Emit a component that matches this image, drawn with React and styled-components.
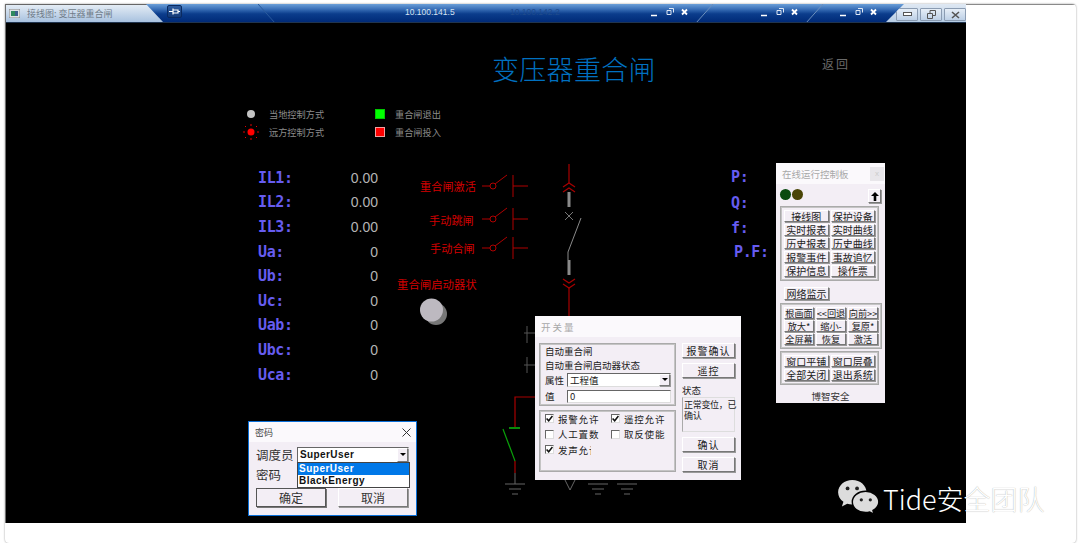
import React from 'react'
import styled, { createGlobalStyle, css } from 'styled-components'

const CJK = `"Noto Sans CJK SC", "Liberation Sans", sans-serif`

const GlobalStyle = createGlobalStyle`
  html, body {
    margin: 0;
    background: #fff;
    font-family: ${CJK};
  }
`

// page coordinates -> canvas coordinates (the canvas starts at 6,23)
const at = (x, y) => css`
  position: absolute;
  left: ${x - 6}px;
  top: ${y - 23}px;
`

const Sheet = styled.div`
  position: relative;
  width: 1071px;
  height: 539px;
  margin: 4px 0 0 5px;
  box-sizing: border-box;
  border-radius: 0 4px 4px 4px;
  box-shadow: 0 0 2px rgba(0, 0, 0, 0.45);
  background: #fff;
  overflow: hidden;
`

const TopLine = styled.div`
  position: absolute;
  left: 899px;
  right: 0;
  top: 0;
  height: 1px;
  background: #8a8a8a;
`

const Window = styled.div`
  width: 961px;
  height: 519px;
  display: flex;
  flex-direction: column;
  box-sizing: border-box;
  border-left: 1px solid #6e6e6e;
`

const TitleBar = styled.div`
  position: relative;
  height: 19px;
  flex: none;
  display: flex;
  align-items: stretch;
  background: linear-gradient(#6b9fd8 0%, #3a70b8 28%, #0b3d8c 55%, #002a78 100%);
  border-bottom: 1px solid #20344f;
  box-sizing: border-box;
  overflow: hidden;
`

const Tab = styled.div`
  position: absolute;
  left: 0;
  top: 0;
  bottom: 0;
  width: 157px;
  clip-path: polygon(0 0, 140px 0, 157px 100%, 0 100%);
  background: linear-gradient(#e4ecf5, #a8c2df);
  border-top: 1px solid #666;
  box-sizing: border-box;
  display: flex;
  align-items: center;
  gap: 7px;
  padding-left: 3px;
  font-size: 9px;
  color: #6f7b88;
`

const TabIcon = styled.svg`
  width: 11px;
  height: 9px;
  flex: none;
`

const PinButton = styled.div`
  position: absolute;
  left: 161px;
  top: 1px;
  width: 15px;
  height: 13px;
  border: 1px solid #0a2a60;
  border-radius: 2px;
  box-sizing: border-box;
  background: linear-gradient(#2d5c9e, #143a78);
  display: flex;
  align-items: center;
  justify-content: center;
`

const HostName = styled.div`
  position: absolute;
  left: ${p => p.$x}px;
  top: 3px;
  font-family: "Liberation Sans", sans-serif;
  font-size: 8.5px;
  line-height: 11px;
  color: ${p => (p.$dim ? '#1e4a8c' : '#d5e2f2')};
`

const WinControls = styled.svg`
  position: absolute;
  left: ${p => p.$x}px;
  top: 2px;
  width: 40px;
  height: 13px;
`

const TabDivider = styled.svg`
  position: absolute;
  left: ${p => p.$x}px;
  top: 0;
  width: 18px;
  height: 19px;
`

const SystemArea = styled.div`
  position: absolute;
  left: 880px;
  right: 0;
  top: 0;
  bottom: 0;
  clip-path: polygon(18px 0, 100% 0, 100% 100%, 0 100%);
  background: linear-gradient(#dfe8f3, #b7cde5);
  display: flex;
  align-items: flex-start;
  justify-content: flex-end;
  gap: 2px;
  padding-top: 4px;
  box-sizing: border-box;
`

const SystemButton = styled.div`
  width: 22px;
  height: 13px;
  border: 1px solid #8b9cb2;
  border-radius: 1px;
  box-sizing: border-box;
  background: linear-gradient(#e6eef7, #bdd0e6);
  display: flex;
  align-items: center;
  justify-content: center;
`

const Canvas = styled.div`
  position: relative;
  flex: 1;
  background: #000;
  overflow: hidden;
`

const Diagram = styled.svg`
  position: absolute;
  left: 0;
  top: 0;
  width: 960px;
  height: 500px;
`

const Title = styled.div`
  ${p => at(p.$x, p.$y)};
  font-size: 27px;
  line-height: 32px;
  font-weight: 300;
  letter-spacing: 0.3px;
  color: #0070c0;
  white-space: nowrap;
`

const BackLabel = styled.div`
  ${p => at(p.$x, p.$y)};
  font-size: 12px;
  line-height: 14px;
  letter-spacing: 2px;
  color: #6a6a6a;
`

const Legend = styled.div`
  ${p => at(p.$x, p.$y)};
  display: grid;
  grid-template-columns: 26px 106px 20px auto;
  grid-auto-rows: 18px;
  align-items: center;
`

const LegendText = styled.span`
  font-size: 9.2px;
  color: #8c8c8c;
  white-space: nowrap;
`

const Swatch = styled.span`
  display: block;
  width: 10px;
  height: 10px;
  background: ${p => p.$color};
  box-shadow: inset 0 0 0 1px ${p => p.$edge};
`

const Readings = styled.div`
  ${p => at(p.$x, p.$y)};
  display: grid;
  grid-template-columns: 60px 60px;
  grid-auto-rows: 24.6px;
  align-items: center;
`

const MeasureName = styled.span`
  font-family: "DejaVu Sans Mono", monospace;
  font-weight: 700;
  font-size: 15px;
  letter-spacing: -0.4px;
  color: #665cf0;
  white-space: pre;
`

const MeasureValue = styled.span`
  font-family: "Liberation Sans", sans-serif;
  font-size: 14px;
  color: #b4b4b4;
  text-align: right;
`

const PowerName = styled(MeasureName)`
  ${p => at(p.$x, p.$y)};
  line-height: 18px;
`

const RedLabel = styled.div`
  ${p => at(p.$x, p.$y)};
  font-size: ${p => p.$size || 11.2}px;
  line-height: 14px;
  color: #d40000;
  white-space: nowrap;
`

const FloatWindow = styled.div`
  ${p => at(p.$x, p.$y)};
  width: ${p => p.$w}px;
  height: ${p => p.$h}px;
  box-sizing: border-box;
  background: #f3eef5;
  color: #222;
  font-size: 10px;
  display: flex;
  flex-direction: column;
`

const FloatTitle = styled.div`
  height: ${p => p.$h}px;
  flex: none;
  background: #fbf9fc;
  color: #a8a8a8;
  font-size: 9.5px;
  letter-spacing: ${p => p.$spacing || 0}px;
  display: flex;
  align-items: center;
  justify-content: space-between;
  padding-left: 6px;
`

const CloseBox = styled.div`
  width: 14px;
  height: 14px;
  margin-right: 1px;
  background: #e8e6ea;
  color: #ccc;
  font-size: 8px;
  line-height: 14px;
  text-align: center;
  font-family: "Liberation Sans", sans-serif;
`

const Bevel = styled.div`
  box-sizing: border-box;
  background: #f3eef5;
  border: 1px solid;
  border-color: #fff #777 #777 #fff;
  box-shadow: 1px 1px 0 #999;
  font-size: ${p => p.$size || 10}px;
  letter-spacing: ${p => p.$spacing || 0}px;
  color: #222;
  display: flex;
  align-items: center;
  justify-content: center;
  white-space: nowrap;
  overflow: hidden;
`

const PanelBody = styled.div`
  flex: 1;
  display: flex;
  flex-direction: column;
  padding: 5px 0 0 4px;
`

const LedRow = styled.div`
  height: 14px;
  flex: none;
  display: flex;
  align-items: flex-start;
  gap: 1px;
`

const Led = styled.span`
  width: 11px;
  height: 11px;
  border-radius: 50%;
  background: ${p => p.$color};
`

const UpButton = styled(Bevel)`
  width: 13px;
  height: 14px;
  margin-left: auto;
  margin-right: 4px;
`

const ButtonGroup = styled.div`
  box-sizing: border-box;
  flex: none;
  margin-top: ${p => p.$top}px;
  width: ${p => p.$w}px;
  border: 1px solid #aaa;
  box-shadow: inset 0 0 0 1px #c4c4c4;
  padding: 3px;
  display: grid;
  grid-template-columns: repeat(${p => p.$cols}, 1fr);
  grid-auto-rows: 12px;
  column-gap: 2px;
  row-gap: ${p => p.$gap}px;
`

const NetButton = styled(Bevel)`
  width: 45px;
  height: 13px;
  flex: none;
  margin: 6px 0 0 4px;
`

const PanelFooter = styled.div`
  margin-top: 5px;
  text-align: center;
  font-size: 9.5px;
  line-height: 12px;
  color: #333;
  padding-right: 4px;
`

const SwitchBody = styled.div`
  flex: 1;
  display: grid;
  grid-template-columns: 137px 53px;
  column-gap: 6px;
  padding: 6px 4px 0 4px;
`

const LeftColumn = styled.div`
  display: flex;
  flex-direction: column;
  gap: 4px;
`

const Fieldset = styled.div`
  box-sizing: border-box;
  height: ${p => p.$h}px;
  border: 1px solid #aaa;
  box-shadow: inset 0 0 0 1px #c4c4c4;
  padding: ${p => p.$pad};
  display: flex;
  flex-direction: column;
`

const PlainLine = styled.div`
  font-size: 9.5px;
  line-height: 14px;
  white-space: nowrap;
`

const FieldRow = styled.div`
  display: flex;
  align-items: center;
  height: ${p => p.$h}px;
  margin-top: ${p => p.$top || 0}px;
  font-size: 9.5px;
`

const FieldName = styled.span`
  width: 22px;
  flex: none;
  white-space: nowrap;
`

const SelectBox = styled.div`
  position: relative;
  box-sizing: border-box;
  flex: none;
  width: ${p => p.$w}px;
  height: ${p => p.$h}px;
  background: #fff;
  border: 1px solid;
  border-color: #666 #ddd #ddd #666;
  display: flex;
  align-items: center;
  padding-left: 2px;
  font-size: ${p => p.$size || 9.5}px;
`

const SelectArrow = styled(Bevel)`
  margin-left: auto;
  width: 11px;
  height: 100%;
  flex: none;
`

const DownGlyph = styled.span`
  width: 0;
  height: 0;
  border-left: 3px solid transparent;
  border-right: 3px solid transparent;
  border-top: 3px solid #000;
`

const ChecksGrid = styled.div`
  display: grid;
  grid-template-columns: 66px 1fr;
  grid-auto-rows: 15.5px;
  align-items: center;
`

const CheckItem = styled.div`
  display: flex;
  align-items: center;
  gap: 4px;
  font-size: 9.5px;
  letter-spacing: 0.8px;
  white-space: nowrap;
`

const CheckCaption = styled.span`
  display: block;
  overflow: hidden;
  max-width: ${p => (p.$clip ? `${p.$clip}px` : 'none')};
`

const Tick = styled.span`
  width: 9px;
  height: 9px;
  flex: none;
  box-sizing: border-box;
  background: #fff;
  border: 1px solid;
  border-color: #666 #ddd #ddd #666;
  display: flex;
  align-items: center;
  justify-content: center;
`

const RightColumn = styled.div`
  display: flex;
  flex-direction: column;
`

const SideButton = styled(Bevel)`
  height: 15px;
  flex: none;
  margin-top: ${p => p.$top || 0}px;
`

const StatusLabel = styled.div`
  font-size: 9.5px;
  line-height: 12px;
  margin-top: 6px;
`

const StatusBox = styled.div`
  box-sizing: border-box;
  height: 35px;
  flex: none;
  margin-top: 1px;
  padding: 1px 0 0 1px;
  border: 1px solid #ddd;
  border-left-color: #aaa;
  font-size: 9px;
  line-height: 11px;
  letter-spacing: -0.3px;
  white-space: nowrap;
`

const LoginWindow = styled(FloatWindow)`
  border: 1px solid #0a6fd8;
`

const LoginTitle = styled(FloatTitle)`
  color: #444;
  font-size: 9px;
  padding-left: 6px;
  padding-right: 5px;
`

const LoginBody = styled.div`
  flex: 1;
  display: grid;
  grid-template-columns: 41px 111px;
  grid-template-rows: 17px 22px 25px;
  padding: 4px 0 0 7px;
  align-items: center;
  font-size: 12.5px;
  color: #333;
`

const Dropdown = styled.div`
  position: absolute;
  left: -1px;
  top: 14px;
  width: 113px;
  box-sizing: border-box;
  border: 1px solid #444;
  background: #fff;
  z-index: 2;
`

const DropItem = styled.div`
  height: 12px;
  line-height: 12px;
  padding-left: 1px;
  font-family: "Liberation Sans", sans-serif;
  font-weight: 700;
  font-size: 10px;
  letter-spacing: 0.5px;
  color: ${p => (p.$active ? '#fff' : '#111')};
  background: ${p => (p.$active ? '#0078e8' : '#fff')};
`

const UserName = styled.span`
  font-family: "Liberation Sans", sans-serif;
  font-weight: 700;
  font-size: 10px;
  letter-spacing: 0.4px;
  color: #111;
`

const LoginButtons = styled.div`
  grid-column: 1 / 3;
  align-self: start;
  margin-top: 3px;
  display: grid;
  grid-template-columns: 70px 70px;
  column-gap: 12px;
  height: 19px;
`

const LoginButton = styled(Bevel)`
  font-size: 12px;
  color: #333;
  ${p => p.$primary && css`border: 1px solid #555; box-shadow: 1px 1px 0 #777;`}
`

const Watermark = styled.div`
  position: absolute;
  left: 832px;
  top: 475px;
  display: flex;
  align-items: flex-start;
  gap: 4px;
`

const WatermarkText = styled.span`
  margin-top: 2px;
  font-size: 27px;
  line-height: 36px;
  font-weight: 300;
  color: #fff;
  text-shadow: 0 0 1px rgba(0, 0, 0, 0.4);
  white-space: nowrap;
`

const readings = [
  ['IL1:', '0.00'], ['IL2:', '0.00'], ['IL3:', '0.00'],
  ['Ua:', '0'], ['Ub:', '0'], ['Uc:', '0'],
  ['Uab:', '0'], ['Ubc:', '0'], ['Uca:', '0'],
]

const powerNames = [
  ['P:', 731, 168], ['Q:', 731, 194], ['f:', 731, 219], ['P.F:', 734, 243],
]

const mainButtons = ['接线图', '保护设备', '实时报表', '实时曲线', '历史报表', '历史曲线', '报警事件', '事故追忆', '保护信息', '操作票']
const viewButtons = ['根画面', '<<回退', '向前>>', '放大*', '缩小-', '复原*', '全屏幕', '恢复', '激活']
const windowButtons = ['窗口平铺', '窗口层叠', '全部关闭', '退出系统']

function Check({ on, clip, children }) {
  return (
    <CheckItem>
      <Tick>
        {on && (
          <svg width="7" height="7" viewBox="0 0 6 6">
            <path d="M0.5 3 L2.3 5 L5.5 0.8" fill="none" stroke="#111" strokeWidth="1.3" />
          </svg>
        )}
      </Tick>
      <CheckCaption $clip={clip}>{children}</CheckCaption>
    </CheckItem>
  )
}

function Contact({ y }) {
  return (
    <g stroke="#b00000" strokeWidth="1" fill="none">
      <path d={`M482 ${y}H490`} />
      <circle cx="493" cy={y} r="3" />
      <path d={`M495 ${y - 2}L507 ${y - 11}`} />
      <path d={`M513 ${y - 11}V${y + 11}M513 ${y}H528`} />
    </g>
  )
}

function Ground({ x, y }) {
  return (
    <path d={`M${x - 10} ${y}H${x + 10}M${x - 6} ${y + 5}H${x + 6}M${x - 3} ${y + 10}H${x + 3}`} stroke="#666" fill="none" />
  )
}

function SessionControls({ x }) {
  return (
    <WinControls $x={x} viewBox="0 0 40 13">
      <path d="M2 9.500H8" stroke="#fff" strokeWidth="1.6" />
      <path d="M18 4.500h4v4h-4zM20 2.500h4.500v4" stroke="#dfe8f5" fill="none" />
      <path d="M33 3.500L38 8.500M38 3.500L33 8.500" stroke="#fff" strokeWidth="1.8" />
    </WinControls>
  )
}

function SingleLine() {
  return (
    <Diagram viewBox="6 23 960 500">
      <circle cx="251" cy="114" r="4" fill="#c4c4c4" />
      <circle cx="251" cy="132" r="3.500" fill="#f00" />
      <path d="M251 124v2M251 138v2M243 132h2M257 132h2M245 126l1 1M257 126l-1 1M245 138l1-1M257 138l-1-1" stroke="#e00000" strokeWidth="1" />

      <Contact y={186} />
      <Contact y={219} />
      <Contact y={248} />

      <g stroke="#a80000" strokeWidth="1.2" fill="none">
        <path d="M569 164V183" />
        <path d="M563 187L569 183L575 187M563 192L569 188L575 192" />
        <path d="M563 279L569 283L575 279M563 284L569 288L575 284" />
        <path d="M569 288V316" />
        <path d="M535 397H515V427" />
        <path d="M515 461V473" />
      </g>
      <path d="M569 192V207M569 260V275" stroke="#8a8a8a" strokeWidth="3" />
      <path d="M565 212L573 220M573 212L565 220" stroke="#777" fill="none" />
      <path d="M581 218L568 252V260" stroke="#8a8a8a" fill="none" />

      <path d="M527 326V343M524 333H535M527 357V373M524 365H535" stroke="#555" fill="none" />

      <path d="M509 428H520" stroke="#0a8a0a" strokeWidth="2" />
      <path d="M503 429L515 461" stroke="#0aa00a" strokeWidth="1.2" fill="none" />
      <path d="M515 473V484" stroke="#666" />
      <Ground x={515} y={484} />
      <path d="M565 480L570 490L575 480" stroke="#666" fill="none" />
      <Ground x={598} y={484} />
      <Ground x={627} y={484} />

      <circle cx="436" cy="314" r="11" fill="#777" />
      <circle cx="431.500" cy="310" r="11.500" fill="#bdb9c0" />
    </Diagram>
  )
}

function ControlPanel() {
  return (
    <FloatWindow $x={776} $y={163} $w={109} $h={240}>
      <FloatTitle $h={21}>
        在线运行控制板
        <CloseBox>x</CloseBox>
      </FloatTitle>
      <PanelBody>
        <LedRow>
          <Led $color="#0a4a10" />
          <Led $color="#4a4506" />
          <UpButton>
            <svg width="8" height="9" viewBox="0 0 8 9">
              <path d="M4 0L8 4H5.300V9H2.700V4H0Z" fill="#000" />
            </svg>
          </UpButton>
        </LedRow>
        <ButtonGroup $cols={2} $w={99} $top={3} $gap={1.7}>
          {mainButtons.map(b => <Bevel key={b}>{b}</Bevel>)}
        </ButtonGroup>
        <NetButton>网络监示</NetButton>
        <ButtonGroup $cols={3} $w={102} $top={3} $gap={1.2}>
          {viewButtons.map(b => <Bevel key={b} $size={9.2}>{b}</Bevel>)}
        </ButtonGroup>
        <ButtonGroup $cols={2} $w={99} $top={2} $gap={1.7}>
          {windowButtons.map(b => <Bevel key={b}>{b}</Bevel>)}
        </ButtonGroup>
        <PanelFooter>博智安全</PanelFooter>
      </PanelBody>
    </FloatWindow>
  )
}

function SwitchDialog() {
  return (
    <FloatWindow $x={535} $y={316} $w={206} $h={164}>
      <FloatTitle $h={21} $spacing={2}>开关量</FloatTitle>
      <SwitchBody>
        <LeftColumn>
          <Fieldset $h={63} $pad="0 4px 0 5px">
            <PlainLine>自动重合闸</PlainLine>
            <PlainLine>自动重合闸启动器状态</PlainLine>
            <FieldRow $h={15} $top={0}>
              <FieldName>属性</FieldName>
              <SelectBox $w={104} $h={14}>
                工程值
                <SelectArrow><DownGlyph /></SelectArrow>
              </SelectBox>
            </FieldRow>
            <FieldRow $h={14} $top={2}>
              <FieldName>值</FieldName>
              <SelectBox $w={104} $h={13}>0</SelectBox>
            </FieldRow>
          </Fieldset>
          <Fieldset $h={62} $pad="0 4px 0 5px">
            <ChecksGrid>
              <Check on>报警允许</Check>
              <Check on>遥控允许</Check>
              <Check>人工置数</Check>
              <Check>取反使能</Check>
              <Check on clip={33}>发声允许</Check>
            </ChecksGrid>
          </Fieldset>
        </LeftColumn>
        <RightColumn>
          <SideButton $spacing={1}>报警确认</SideButton>
          <SideButton $top={5} $spacing={1}>遥控</SideButton>
          <StatusLabel>状态</StatusLabel>
          <StatusBox>正常变位，已<br />确认</StatusBox>
          <SideButton $top={5} $spacing={1}>确认</SideButton>
          <SideButton $top={5} $spacing={1}>取消</SideButton>
        </RightColumn>
      </SwitchBody>
    </FloatWindow>
  )
}

function LoginDialog() {
  return (
    <LoginWindow $x={248} $y={421} $w={169} $h={95}>
      <LoginTitle $h={20}>
        密码
        <svg width="9" height="9" viewBox="0 0 9 9">
          <path d="M0.500 0.500L8.500 8.500M8.500 0.500L0.500 8.500" stroke="#333" fill="none" />
        </svg>
      </LoginTitle>
      <LoginBody>
        <span>调度员</span>
        <SelectBox $w={112} $h={16}>
          <UserName>SuperUser</UserName>
          <SelectArrow><DownGlyph /></SelectArrow>
          <Dropdown>
            <DropItem $active>SuperUser</DropItem>
            <DropItem>BlackEnergy</DropItem>
          </Dropdown>
        </SelectBox>
        <span>密码</span>
        <span />
        <LoginButtons>
          <LoginButton $primary>确定</LoginButton>
          <LoginButton>取消</LoginButton>
        </LoginButtons>
      </LoginBody>
    </LoginWindow>
  )
}

export default function App() {
  return (
    <>
      <GlobalStyle />
      <Sheet>
        <TopLine />
        <Window>
          <TitleBar>
            <HostName $x={399}>10.100.141.5</HostName>
            <HostName $x={504} $dim>10.100.142.2</HostName>
            <TabDivider $x={252} viewBox="0 0 18 19"><path d="M0 0L17 19" stroke="#2a5a9c" /></TabDivider>
            <SessionControls x={643} />
            <TabDivider $x={690} viewBox="0 0 18 19"><path d="M17 0L0 19" stroke="#6c8fbd" /></TabDivider>
            <SessionControls x={753} />
            <TabDivider $x={800} viewBox="0 0 18 19"><path d="M17 0L0 19" stroke="#6c8fbd" /></TabDivider>
            <SessionControls x={832} />
            <Tab>
              <TabIcon viewBox="0 0 11 9">
                <rect width="11" height="9" fill="#dfe3e6" stroke="#888" />
                <rect x="2" y="2" width="4" height="5" fill="#2f8a5e" />
                <rect x="6" y="2" width="3" height="5" fill="#3a5f8a" />
              </TabIcon>
              接线图: 变压器重合闸
            </Tab>
            <PinButton>
              <svg width="11" height="7" viewBox="0 0 11 7">
                <path d="M0 3.500H4M4 0.500V6.500M4 2H9V5H4M9 3.500H11" stroke="#fff" fill="none" strokeWidth="1.2" />
              </svg>
            </PinButton>
            <SystemArea>
              <SystemButton>
                <svg width="9" height="5" viewBox="0 0 9 5"><rect x="0.500" y="0.500" width="8" height="3" fill="#fff" stroke="#555" /></svg>
              </SystemButton>
              <SystemButton>
                <svg width="9" height="9" viewBox="0 0 9 9"><path d="M0.500 3.500h5v5h-5zM3 3V0.500h5.500v5H6" fill="none" stroke="#555" /></svg>
              </SystemButton>
              <SystemButton>
                <svg width="9" height="8" viewBox="0 0 9 8"><path d="M1 1L8 7M8 1L1 7" stroke="#555" strokeWidth="1.6" /></svg>
              </SystemButton>
            </SystemArea>
          </TitleBar>

          <Canvas>
            <SingleLine />
            <Title $x={492} $y={53}>变压器重合闸</Title>
            <BackLabel $x={822} $y={57}>返回</BackLabel>

            <Legend $x={243} $y={105}>
              <span />
              <LegendText>当地控制方式</LegendText>
              <Swatch $color="#00ff00" $edge="#00c800" />
              <LegendText>重合闸退出</LegendText>
              <span />
              <LegendText>远方控制方式</LegendText>
              <Swatch $color="#ff0000" $edge="#f0a0a0" />
              <LegendText>重合闸投入</LegendText>
            </Legend>

            <Readings $x={258} $y={165.5}>
              {readings.map(([name, value]) => (
                <React.Fragment key={name}>
                  <MeasureName>{name}</MeasureName>
                  <MeasureValue>{value}</MeasureValue>
                </React.Fragment>
              ))}
            </Readings>

            {powerNames.map(([name, x, y]) => (
              <PowerName key={name} $x={x} $y={y}>{name}</PowerName>
            ))}

            <RedLabel $x={420} $y={179}>重合闸激活</RedLabel>
            <RedLabel $x={429} $y={213}>手动跳闸</RedLabel>
            <RedLabel $x={430} $y={241}>手动合闸</RedLabel>
            <RedLabel $x={397} $y={277} $size={11.4}>重合闸启动器状</RedLabel>

            <SwitchDialog />
            <ControlPanel />
            <LoginDialog />
          </Canvas>
        </Window>

        <Watermark>
          <svg width="42" height="36" viewBox="0 0 44 38">
            <path d="M16 1C7.700 1 1 6.700 1 14c0 4.100 2.200 7.700 5.600 10.100L5 29l5.600-2.900c1.700.5 3.500.9 5.400.9 8.300 0 15-5.800 15-13S24.300 1 16 1z" fill="#dcdcdc" />
            <path d="M30 13c-7.700 0-14 5-14 11.200S22.300 35.400 30 35.400c1.500 0 3-.2 4.400-.6L39 37.400l-1.200-4.200C41 31.200 44 28 44 24.200 44 18 37.700 13 30 13z" fill="#dcdcdc" stroke="#000" strokeWidth="1.500" />
            <circle cx="11" cy="10" r="2" fill="#222" />
            <circle cx="21" cy="10" r="2" fill="#222" />
            <circle cx="25.500" cy="22" r="1.700" fill="#222" />
            <circle cx="35" cy="22" r="1.700" fill="#222" />
          </svg>
          <WatermarkText>Tide安全团队</WatermarkText>
        </Watermark>
      </Sheet>
    </>
  )
}
